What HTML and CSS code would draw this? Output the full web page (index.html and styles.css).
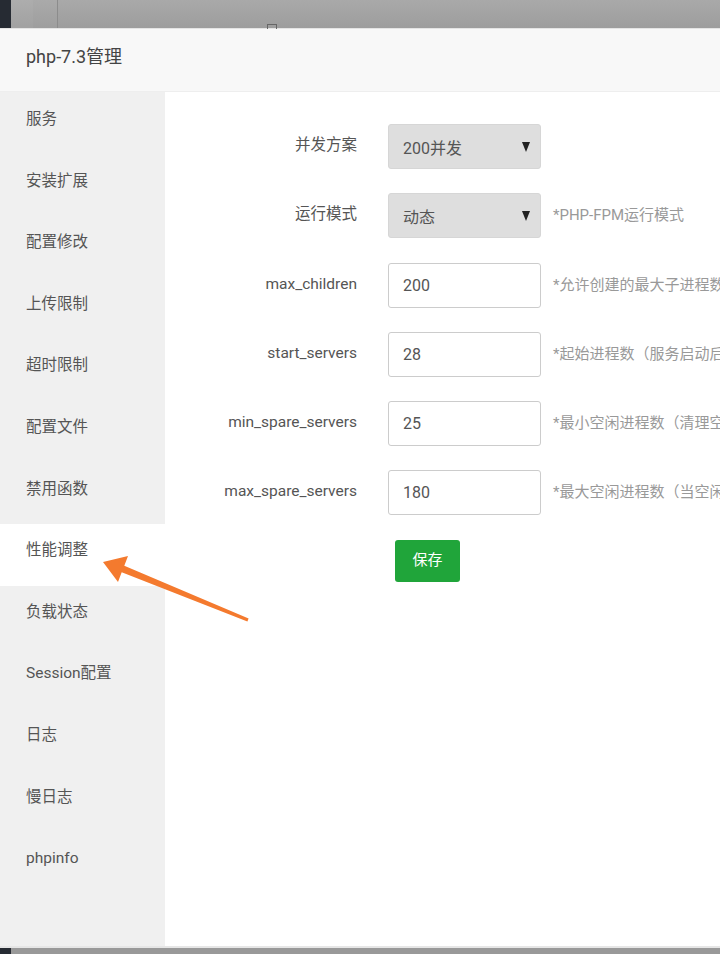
FILE: index.html
```html
<!DOCTYPE html>
<html lang="zh-CN">

<head>
    <meta charset="UTF-8">
    <meta name="viewport" content="width=device-width, initial-scale=1.0">
    <title>php-7.3管理</title>
    <link rel="stylesheet" href="styles.css">
</head>

<body>
    <div class="shade-top">
        <div class="shade-dark"></div>
        <div class="shade-panel"></div>
        <div class="shade-panel alt"></div>
        <div class="shade-line"></div>
        <div class="shade-mark"></div>
    </div>

    <div class="layer">
        <div class="layer-title">php-7.3管理</div>
        <div class="layer-body">
            <div class="menu">
                <p>服务</p>
                <p>安装扩展</p>
                <p>配置修改</p>
                <p>上传限制</p>
                <p>超时限制</p>
                <p>配置文件</p>
                <p>禁用函数</p>
                <p class="active">性能调整</p>
                <p>负载状态</p>
                <p>Session配置</p>
                <p>日志</p>
                <p>慢日志</p>
                <p>phpinfo</p>
            </div>
            <div class="content">
                <div class="line">
                    <span class="tname">并发方案</span>
                    <div class="select"><span>200并发</span><i class="caret"></i></div>
                </div>
                <div class="line">
                    <span class="tname">运行模式</span>
                    <div class="select"><span>动态</span><i class="caret"></i></div>
                    <span class="tips">*PHP-FPM运行模式</span>
                </div>
                <div class="line">
                    <span class="tname">max_children</span>
                    <input class="input" type="text" value="200">
                    <span class="tips">*允许创建的最大子进程数</span>
                </div>
                <div class="line">
                    <span class="tname">start_servers</span>
                    <input class="input" type="text" value="28">
                    <span class="tips">*起始进程数（服务启动后初始进程数量）</span>
                </div>
                <div class="line">
                    <span class="tname">min_spare_servers</span>
                    <input class="input" type="text" value="25">
                    <span class="tips">*最小空闲进程数（清理空闲进程后的保留数量）</span>
                </div>
                <div class="line">
                    <span class="tname">max_spare_servers</span>
                    <input class="input" type="text" value="180">
                    <span class="tips">*最大空闲进程数（当空闲进程达到此值时清理）</span>
                </div>
                <div class="line">
                    <span class="tname"></span>
                    <button class="btn-save">保存</button>
                </div>
            </div>
        </div>
    </div>

    <div class="shade-bottom">
        <div class="shade-dark"></div>
    </div>

    <!-- annotation arrow pointing at the active menu item -->
    <svg class="arrow" width="720" height="954" viewBox="0 0 720 954">
        <polygon fill="#f47a2e"
            points="247.4,621.4 248.6,618.6 124.3,565.8 128,556 103,562 118,582 121.7,572.2" />
    </svg>
</body>

</html>
```

FILE: styles.css
```css
body {
    margin: 0;
    padding: 0;
    width: 720px;
    height: 954px;
    overflow: hidden;
    position: relative;
    background: #9c9c9c;
    font-family: Roboto, "Noto Sans CJK SC", sans-serif;
    color: #555;
}

.shade-top {
    display: flex;
    height: 28px;
    background: linear-gradient(to bottom, #a9a9a9, #9d9d9d);
    position: relative;
}

.shade-dark {
    width: 11px;
    background: #262b33;
}

.shade-panel {
    width: 22px;
    background: rgba(255, 255, 255, 0.05);
}

.shade-panel.alt {
    width: 24px;
    background: rgba(255, 255, 255, 0.02);
}

.shade-line {
    width: 1px;
    background: #8c8c8c;
}

.shade-mark {
    position: absolute;
    left: 267px;
    top: 24px;
    width: 8px;
    height: 4px;
    border: 1px solid #666;
    border-bottom: none;
}

.layer {
    height: 918px;
    background: #fff;
    display: flex;
    flex-direction: column;
}

.layer-title {
    height: 64px;
    line-height: 56px;
    padding-left: 26px;
    font-size: 18px;
    color: #444;
    background: #f8f8f8;
    border-top: 1px solid #e4e4e4;
    border-bottom: 1px solid #eee;
    box-sizing: border-box;
}

.layer-body {
    flex: 1;
    display: flex;
}

.menu {
    width: 165px;
    background: #f0f0f0;
    padding-top: 1px;
}

.menu p {
    margin: 0;
    height: 61.6px;
    line-height: 52px;
    padding-left: 26px;
    font-size: 15.5px;
    color: #555;
}

.menu p.active {
    background: #fff;
}

.content {
    flex: 1;
    padding-top: 32px;
    overflow: hidden;
}

.line {
    display: flex;
    align-items: flex-start;
    height: 45px;
    margin-bottom: 24.3px;
    white-space: nowrap;
}

.tname {
    width: 192px;
    flex-shrink: 0;
    text-align: right;
    line-height: 42px;
    font-size: 15.5px;
    color: #555;
    margin-right: 31px;
}

.select,
.input {
    width: 153px;
    height: 45px;
    flex-shrink: 0;
    box-sizing: border-box;
    border-radius: 3px;
    font-family: Roboto, "Noto Sans CJK SC", sans-serif;
    font-size: 16px;
    color: #555;
    padding: 0 14px;
}

.select {
    display: flex;
    align-items: center;
    justify-content: space-between;
    background: #dedede;
    border: 1px solid #d6d6d6;
}

.caret {
    width: 0;
    height: 0;
    border-left: 4.5px solid transparent;
    border-right: 4.5px solid transparent;
    border-top: 10px solid #222;
    margin-right: -4px;
}

.input {
    background: #fff;
    border: 1px solid #ccc;
    outline: none;
    margin: 0;
}

.tips {
    margin-left: 12px;
    line-height: 45px;
    font-size: 15px;
    color: #999;
}

.btn-save {
    margin-left: 7px;
    width: 65px;
    height: 42px;
    border: none;
    border-radius: 3px;
    background: #20a53a;
    color: #fff;
    font-family: Roboto, "Noto Sans CJK SC", sans-serif;
    font-size: 15px;
    padding: 0 0 4px;
    cursor: pointer;
}

.shade-bottom {
    display: flex;
    height: 8px;
    background: #999;
    border-top: 2px solid #e6e6e6;
    box-sizing: border-box;
}

.arrow {
    position: absolute;
    left: 0;
    top: 0;
    pointer-events: none;
}
```
